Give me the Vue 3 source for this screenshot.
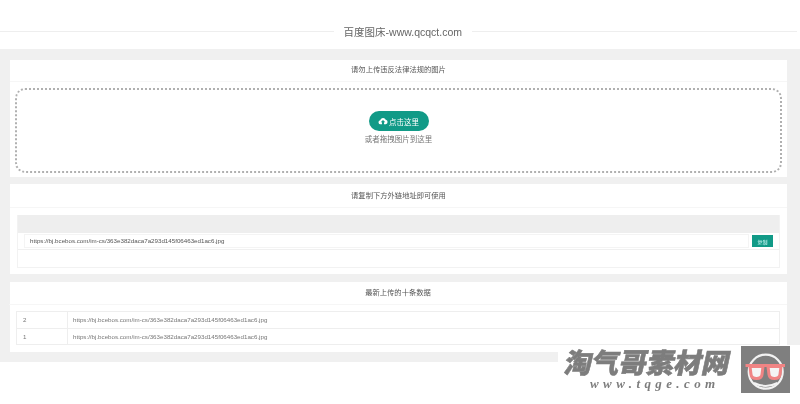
<script setup>
const url = 'https://bj.bcebos.com/im-cs/363e382daca7a293d145f06463ed1ac6.jpg'
const rows = [
  { id: 2, url },
  { id: 1, url }
]
</script>

<template>
  <div class="page">
    <header class="top">
      <span class="top__line"></span>
      <h1 class="top__title">百度图床-www.qcqct.com</h1>
      <span class="top__line"></span>
    </header>

    <main class="body">
      <section class="panel">
        <div class="panel__head">请勿上传违反法律法规的图片</div>
        <div class="drop">
          <button class="drop__btn" type="button">
            <svg class="drop__icon" viewBox="0 0 24 18" aria-hidden="true">
              <path d="M6 17a5 5 0 0 1-.8-9.900A7 7 0 0 1 18.600 6.200 5.500 5.500 0 0 1 18.500 17H14.500v-5h3L12 6.500 6.500 12h3v5z" fill="#fff" />
            </svg>
            点击这里
          </button>
          <p class="drop__hint">或者拖拽图片到这里</p>
        </div>
      </section>

      <section class="panel panel--copy">
        <div class="panel__head panel__head--copy">请复制下方外链地址即可使用</div>
        <div class="result">
          <div class="result__bar"></div>
          <div class="result__row">
            <div class="result__input">{{ url }}</div>
            <button class="result__copy" type="button">复制</button>
          </div>
          <div class="result__empty"></div>
        </div>
      </section>

      <section class="panel panel--latest">
        <div class="panel__head panel__head--latest">最新上传的十条数据</div>
        <table class="list">
          <tbody>
            <tr v-for="row in rows" :key="row.id">
              <td class="list__id">{{ row.id }}</td>
              <td>{{ row.url }}</td>
            </tr>
          </tbody>
        </table>
      </section>
    </main>

    <div class="mark">
      <div class="mark__text">
        <div class="mark__cn">淘气哥素材网</div>
        <div class="mark__en">www.tqge.com</div>
      </div>
      <svg class="mark__logo" viewBox="0 0 49 47" aria-hidden="true">
        <rect width="49" height="47" fill="#7f7f7f" />
        <circle cx="24.700" cy="25.700" r="17" fill="none" stroke="#f2f2f2" stroke-width="2.200" />
        <path d="M13 37q11.700 6 23.400 0" fill="none" stroke="#f2f2f2" stroke-width="2" />
        <path d="M4.500 19.500h39.500" stroke="#f08484" stroke-width="3" />
        <path d="M9 20.500h13l-1 8q-.5 4-5.500 4t-5.500-4zM27 20.500h13l-1 8q-.5 4-5.500 4t-5.500-4z" fill="#f4f4f4" stroke="#f08484" stroke-width="3" stroke-linejoin="round" />
      </svg>
    </div>
  </div>
</template>

<style scoped>
.page {
  position: relative;
  width: 800px;
  height: 404px;
  overflow: hidden;
  background: #fff;
  font-family: "Liberation Sans", "Noto Sans CJK SC", sans-serif;
  color: #666;
  filter: blur(0.35px);
}

.top {
  display: flex;
  align-items: center;
  gap: 10px;
  height: 49px;
  padding: 14px 3px 0 0;
  box-sizing: border-box;
}

.top__line {
  flex: 1;
  height: 1px;
  background: #eee;
}

.top .top__line:last-child {
  flex: 0 0 325px;
}

.top__title {
  margin: 0;
  font-size: 10.500px;
  font-weight: 400;
  color: #666;
}

.body {
  display: flex;
  flex-direction: column;
  gap: 7px;
  height: 313px;
  box-sizing: border-box;
  padding: 11px 13px 0 10px;
  background: #f0f0f0;
}

.panel {
  height: 117px;
  box-sizing: border-box;
  background: #fff;
  padding: 0 5px;
}

.panel--copy {
  height: 90px;
  padding: 0 7px;
}

.panel--latest {
  height: 70px;
  padding: 0 7px 0 6px;
  margin-top: 1px;
}

.panel__head {
  height: 21px;
  margin: 0 -5px 6px;
  border-bottom: 1px solid #f6f6f6;
  font-size: 7.300px;
  line-height: 20px;
  text-align: center;
  color: #555;
}

.panel__head--copy {
  height: 23px;
  margin: 0 -7px 7px;
  line-height: 23px;
}

.panel__head--latest {
  height: 22px;
  margin: 0 -7px 6px;
  line-height: 22px;
}

.drop {
  display: flex;
  flex-direction: column;
  align-items: center;
  height: 85px;
  box-sizing: border-box;
  padding-top: 22px;
  border: 2px dotted #b0b0b0;
  border-radius: 10px;
}

.drop__btn {
  display: flex;
  align-items: center;
  justify-content: center;
  gap: 1px;
  width: 60px;
  height: 20px;
  margin-top: -1px;
  padding: 0;
  border: 0;
  border-radius: 10px;
  background: #119a87;
  color: #fff;
  font: 7.500px "Liberation Sans", "Noto Sans CJK SC", sans-serif;
}

.drop__icon {
  width: 10px;
  height: 8px;
}

.drop__hint {
  margin: 3px 0 0;
  font-size: 7.500px;
  line-height: 11px;
  color: #777;
}

.result {
  height: 52px;
  border: 1px solid #f2f2f2;
  border-top: 0;
}

.result__bar {
  height: 18px;
  background: #eee;
}

.result__row {
  display: flex;
  align-items: center;
  gap: 3px;
  height: 17px;
  box-sizing: border-box;
  padding: 0 6px;
  border-bottom: 1px solid #f0f0f0;
}

.result__input {
  flex: 1;
  height: 14px;
  box-sizing: border-box;
  padding-left: 5px;
  border: 1px solid #f4f4f4;
  font-size: 6.200px;
  line-height: 11px;
  color: #555;
}

.result__copy {
  width: 21px;
  height: 12px;
  padding: 0;
  border: 0;
  background: #119a87;
  color: #dff;
  font: 5px "Liberation Sans", "Noto Sans CJK SC", sans-serif;
}

.result__empty {
  height: 17px;
}

.list {
  width: 100%;
  border-collapse: collapse;
  table-layout: fixed;
  font-size: 6.200px;
  color: #777;
}

.list td {
  height: 15.500px;
  padding: 0 0 0 5px;
  border: 1px solid #eee;
}

.list .list__id {
  width: 44px;
  padding-left: 6px;
}

.mark {
  position: absolute;
  top: 345px;
  left: 558px;
  right: 0;
  bottom: 0;
  display: flex;
  gap: 8px;
  padding: 1px 0 0 7px;
  background: #fff;
}

.mark__text {
  width: 168px;
  padding-top: 5px;
}

.mark__cn {
  transform: skewX(-12deg);
  font-size: 27.500px;
  font-weight: 900;
  line-height: 26px;
  white-space: nowrap;
  color: #7d7d7d;
  -webkit-text-stroke: 0.6px #7d7d7d;
}

.mark__en {
  margin-top: 0;
  padding-left: 25px;
  font-family: "Liberation Serif", serif;
  font-size: 13px;
  font-style: italic;
  font-weight: 700;
  line-height: 13px;
  letter-spacing: 4.400px;
  color: #7d7d7d;
}

.mark__logo {
  flex: none;
  width: 49px;
  height: 47px;
}
</style>
